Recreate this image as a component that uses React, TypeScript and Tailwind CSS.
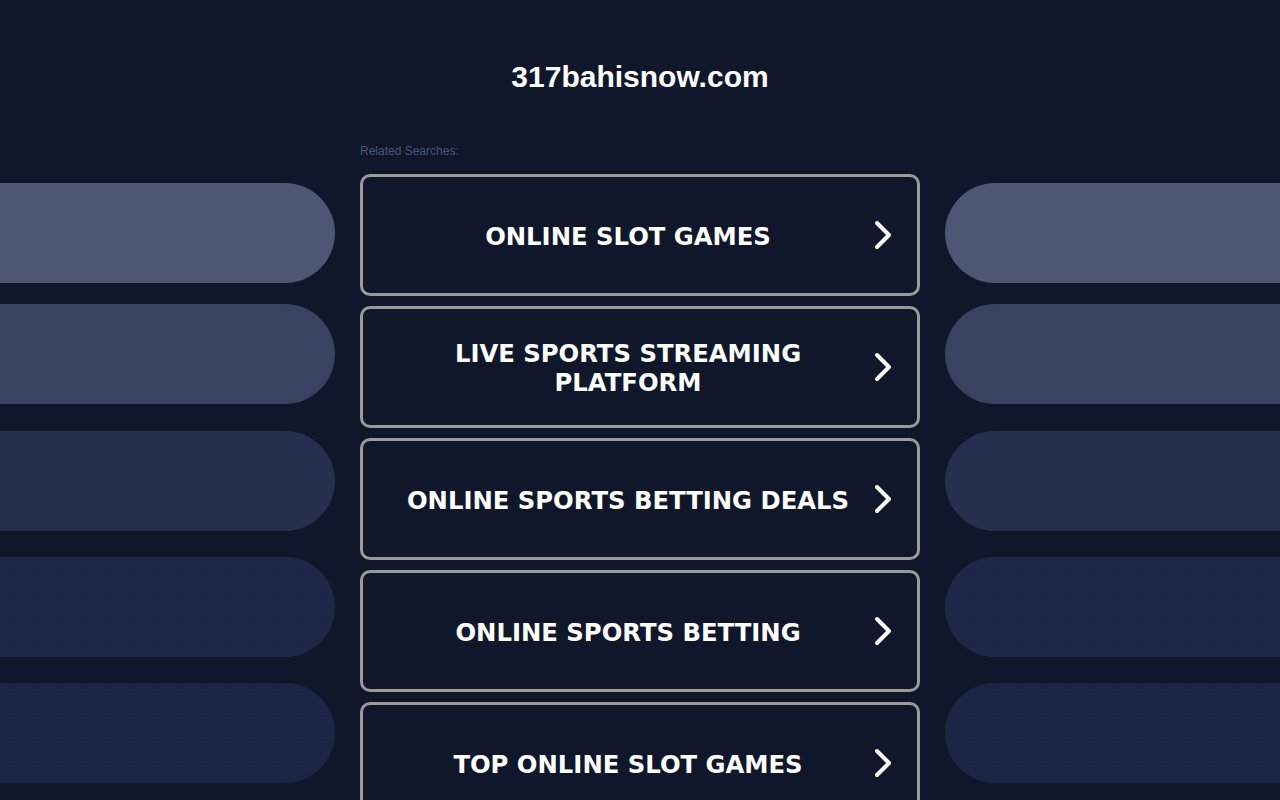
import React from "react";

type Search = {
  id: string;
  title: string;
};

const searches: Search[] = [
  { id: "slot-games", title: "ONLINE SLOT GAMES" },
  { id: "live-streaming", title: "LIVE SPORTS STREAMING PLATFORM" },
  { id: "betting-deals", title: "ONLINE SPORTS BETTING DEALS" },
  { id: "sports-betting", title: "ONLINE SPORTS BETTING" },
  { id: "top-slot-games", title: "TOP ONLINE SLOT GAMES" },
];

// background pills on both sides, fading from lighter slate to navy
const pills = [
  "mt-0 bg-[#4d5673]",
  "mt-[21px] bg-[#3a4261]",
  "mt-[27px] bg-[#262f4d]",
  "mt-[26px] bg-[#1d2646] bg-[radial-gradient(circle,rgba(120,140,200,0.06)_0.6px,transparent_0.8px)] bg-[length:3px_3px]",
  "mt-[26px] bg-[#1b2444] bg-[radial-gradient(circle,rgba(120,140,200,0.07)_0.6px,transparent_0.8px)] bg-[length:3px_3px]",
];

const Chevron = () => (
  <svg width="20" height="30" viewBox="0 0 20 30" fill="none" className="shrink-0">
    <path
      d="M4 3 L16 15 L4 27"
      stroke="white"
      strokeWidth="4"
      strokeLinecap="round"
      strokeLinejoin="round"
    />
  </svg>
);

const SidePills = ({ side }: { side: "left" | "right" }) => (
  <div className="flex flex-col pt-[43px]">
    {pills.map((cls, i) => (
      <div
        key={i}
        className={`h-[100px] w-full ${cls} ${
          side === "left" ? "rounded-r-full" : "rounded-l-full"
        }`}
      />
    ))}
  </div>
);

const App = () => {
  return (
    <div className="min-h-screen w-full overflow-hidden bg-[#11172b] font-['Liberation_Sans',Arial,sans-serif]">
      <header className="flex justify-center pt-[59px] h-[140px]">
        <h1 className="text-[30px] leading-[36px] font-bold text-white">317bahisnow.com</h1>
      </header>

      <div className="grid grid-cols-[1fr_560px_1fr] gap-x-[25px]">
        <SidePills side="left" />

        <div className="flex flex-col">
          <div className="pt-[1px] text-[12px] leading-[20px] text-[#4b5578]">Related Searches:</div>
          <div className="mt-[13px] flex flex-col gap-[10px]">
            {searches.map((item) => (
              <a
                key={item.id}
                href="#"
                className="flex h-[122px] items-center rounded-[10px] border-[3px] border-[#9a9a9a] bg-[#11172b] pl-[20px] pr-[24px]"
              >
                <span className="flex-1 px-[18px] pt-[2px] text-center font-['DejaVu_Sans',Verdana,sans-serif] text-[24.3px] font-bold leading-[29px] text-white">
                  {item.title}
                </span>
                <Chevron />
              </a>
            ))}
          </div>
        </div>

        <SidePills side="right" />
      </div>
    </div>
  );
};

export default App;
